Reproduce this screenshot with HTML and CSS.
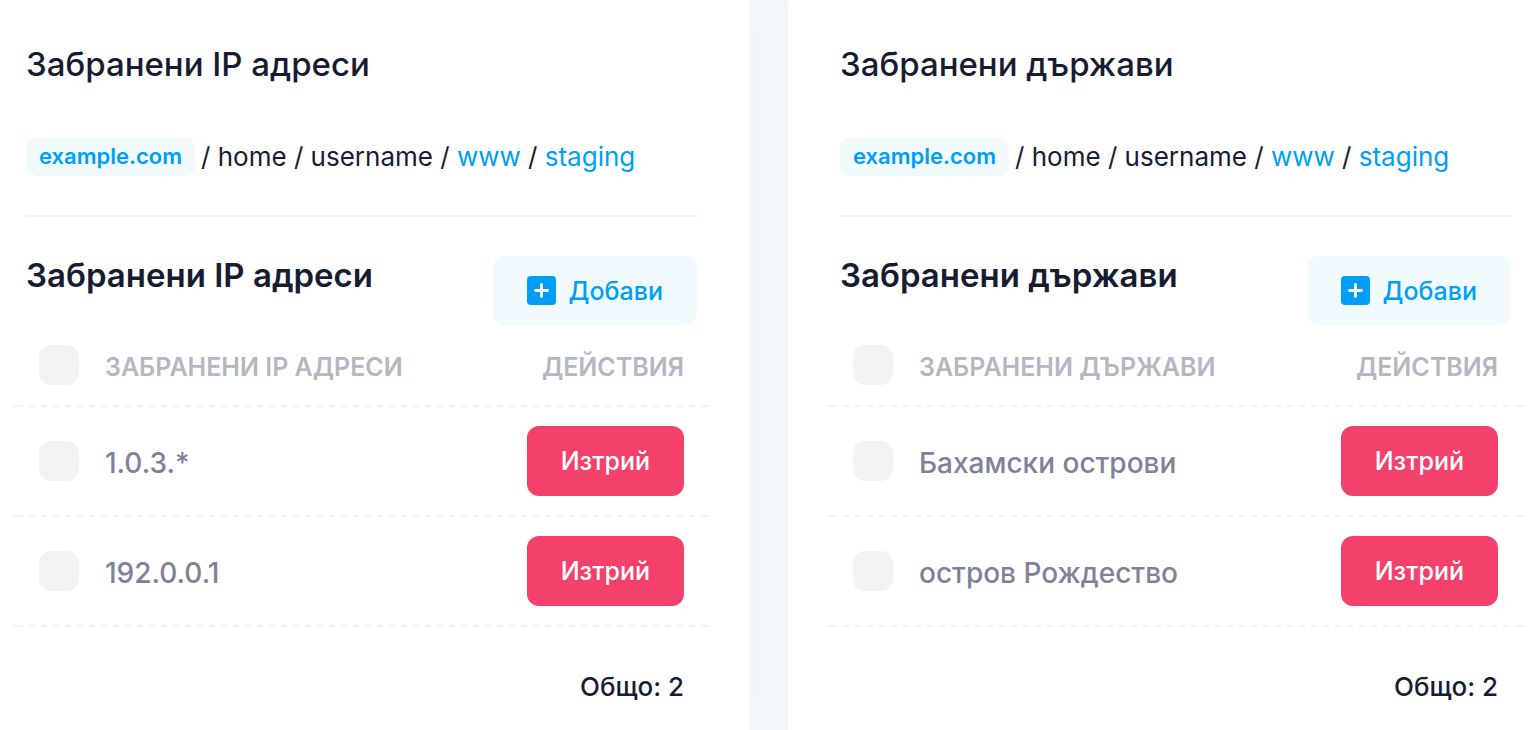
FILE: index.html
```html
<!DOCTYPE html>
<html lang="bg">
<head>
    <meta charset="UTF-8">
    <meta name="viewport" content="width=device-width, initial-scale=1.0">
    <title>Забранени IP адреси и държави</title>
    <link rel="stylesheet" href="styles.css">
</head>
<body>
    <main class="panels">
        <!-- Blocked IP addresses -->
        <section class="panel panel-left">
            <h1 class="panel-title">Забранени IP адреси</h1>
            <nav class="path">
                <a class="path-domain" href="#">example.com</a>
                <span>/ home / username / <a href="#">www</a> / <a href="#">staging</a></span>
            </nav>
            <div class="toolbar">
                <h2 class="toolbar-title">Забранени IP адреси</h2>
                <button type="button" class="btn btn-add">
                    <svg class="btn-icon" viewBox="0 0 29 29" aria-hidden="true">
                        <rect width="29" height="29" rx="4" fill="#009ef7"/>
                        <path d="M14.5 8.5v12M8.5 14.5h12" stroke="#fff" stroke-width="2.8" stroke-linecap="round"/>
                    </svg>
                    Добави
                </button>
            </div>
            <table class="list">
                <thead>
                    <tr>
                        <th class="col-check"><input type="checkbox" class="check" aria-label="Избери всички"></th>
                        <th class="col-text">Забранени IP адреси</th>
                        <th class="col-text col-action">Действия</th>
                    </tr>
                </thead>
                <tbody>
                    <tr>
                        <td class="col-check"><input type="checkbox" class="check" aria-label="1.0.3.*"></td>
                        <td class="col-text">1.0.3.*</td>
                        <td class="col-action"><button type="button" class="btn btn-delete">Изтрий</button></td>
                    </tr>
                    <tr>
                        <td class="col-check"><input type="checkbox" class="check" aria-label="192.0.0.1"></td>
                        <td class="col-text">192.0.0.1</td>
                        <td class="col-action"><button type="button" class="btn btn-delete">Изтрий</button></td>
                    </tr>
                </tbody>
            </table>
            <p class="total">Общо: 2</p>
        </section>

        <!-- Blocked countries -->
        <section class="panel panel-right">
            <h1 class="panel-title">Забранени държави</h1>
            <nav class="path">
                <a class="path-domain" href="#">example.com</a>
                <span>/ home / username / <a href="#">www</a> / <a href="#">staging</a></span>
            </nav>
            <div class="toolbar">
                <h2 class="toolbar-title">Забранени държави</h2>
                <button type="button" class="btn btn-add">
                    <svg class="btn-icon" viewBox="0 0 29 29" aria-hidden="true">
                        <rect width="29" height="29" rx="4" fill="#009ef7"/>
                        <path d="M14.5 8.5v12M8.5 14.5h12" stroke="#fff" stroke-width="2.8" stroke-linecap="round"/>
                    </svg>
                    Добави
                </button>
            </div>
            <table class="list">
                <thead>
                    <tr>
                        <th class="col-check"><input type="checkbox" class="check" aria-label="Избери всички"></th>
                        <th class="col-text">Забранени държави</th>
                        <th class="col-text col-action">Действия</th>
                    </tr>
                </thead>
                <tbody>
                    <tr>
                        <td class="col-check"><input type="checkbox" class="check" aria-label="Бахамски острови"></td>
                        <td class="col-text">Бахамски острови</td>
                        <td class="col-action"><button type="button" class="btn btn-delete">Изтрий</button></td>
                    </tr>
                    <tr>
                        <td class="col-check"><input type="checkbox" class="check" aria-label="остров Рождество"></td>
                        <td class="col-text">остров Рождество</td>
                        <td class="col-action"><button type="button" class="btn btn-delete">Изтрий</button></td>
                    </tr>
                </tbody>
            </table>
            <p class="total">Общо: 2</p>
        </section>
    </main>
</body>
</html>
```
FILE: styles.css
```css
/* Global styles */
* {
    box-sizing: border-box;
}

body {
    margin: 0;
    font-family: Inter, "Liberation Sans", sans-serif;
    font-size: 26px;
    line-height: 39px;
    color: #181c32;
    background-color: #f5f8fa;
}

a {
    color: #009ef7;
    text-decoration: none;
}

/* Two panels side by side */
.panels {
    display: grid;
    grid-template-columns: calc(50% - 18px) 1fr;
    gap: 39px;
    min-height: 100vh;
}

.panel {
    padding-top: 44px;
    background-color: #fff;
    box-shadow: 0 0 40px rgba(76, 87, 125, 0.02);
}

.panel-left {
    padding-left: 26px;
    padding-right: 52px;
    border-top-right-radius: 4px;
}

.panel-right {
    padding-left: 52px;
    padding-right: 23px;
    border-top-left-radius: 4px;
}

.panel-title {
    margin: 0;
    font-size: 33px;
    line-height: 40px;
    font-weight: 500;
}

/* Path line */
.path {
    display: flex;
    align-items: center;
    gap: 6px;
    margin-top: 53px;
    padding-bottom: 39px;
    border-bottom: 2px solid #f3f3f4;
}

.path-domain {
    padding: 0 13px;
    border-radius: 10px;
    background-color: #f1faff;
    font-size: 22px;
    font-weight: 600;
}

/* Section title and add button */
.toolbar {
    display: flex;
    justify-content: space-between;
    align-items: flex-start;
    margin-top: 39px;
}

.toolbar-title {
    margin: 0;
    font-size: 33px;
    line-height: 39px;
    font-weight: 600;
}

.btn {
    height: 69px;
    padding: 0 34px;
    border: none;
    border-radius: 12px;
    font-family: inherit;
    font-size: 25px;
    font-weight: 500;
    cursor: pointer;
}

.btn-add {
    display: flex;
    align-items: center;
    gap: 13px;
    background-color: #f1faff;
    color: #009ef7;
}

.btn-icon {
    width: 29px;
    height: 29px;
}

.btn-delete {
    display: block;
    height: 70px;
    margin-left: auto;
    background-color: #f4416c;
    color: #fff;
}

/* Tables */
.list {
    width: calc(100% + 26px);
    margin: 0 -13px;
    border-collapse: collapse;
}

/* Dashed line under each row, with a longer dash at both ends */
.list tr {
    background:
        linear-gradient(#f3f3f4, #f3f3f4) left bottom / 10px 2px no-repeat,
        linear-gradient(#f3f3f4, #f3f3f4) right bottom / 9px 2px no-repeat,
        linear-gradient(90deg, #f3f3f4 6px, transparent 6px) 4px bottom / 12px 2px repeat-x;
}

.list th,
.list td {
    padding: 19px 0 21px;
    text-align: left;
    vertical-align: middle;
}

.list th {
    padding-top: 20px;
    padding-bottom: 22px;
    font-size: 25px;
    line-height: 39px;
    font-weight: 600;
    text-transform: uppercase;
    color: #b5b5c3;
}

.list td {
    font-size: 28px;
    font-weight: 500;
    color: #7e8299;
}

.list .col-text {
    padding-top: 22px;
    padding-bottom: 20px;
}

.list .col-check {
    width: 92px;
    padding-left: 26px;
}

.list .col-action {
    padding-right: 26px;
    text-align: right;
}

.check {
    display: block;
    appearance: none;
    width: 40px;
    height: 40px;
    margin: 0;
    border-radius: 12px;
    background-color: #f3f3f3;
    cursor: pointer;
}

.check:checked {
    background-color: #009ef7;
}

.total {
    margin: 40px 13px 0;
    text-align: right;
    font-weight: 500;
}
```
